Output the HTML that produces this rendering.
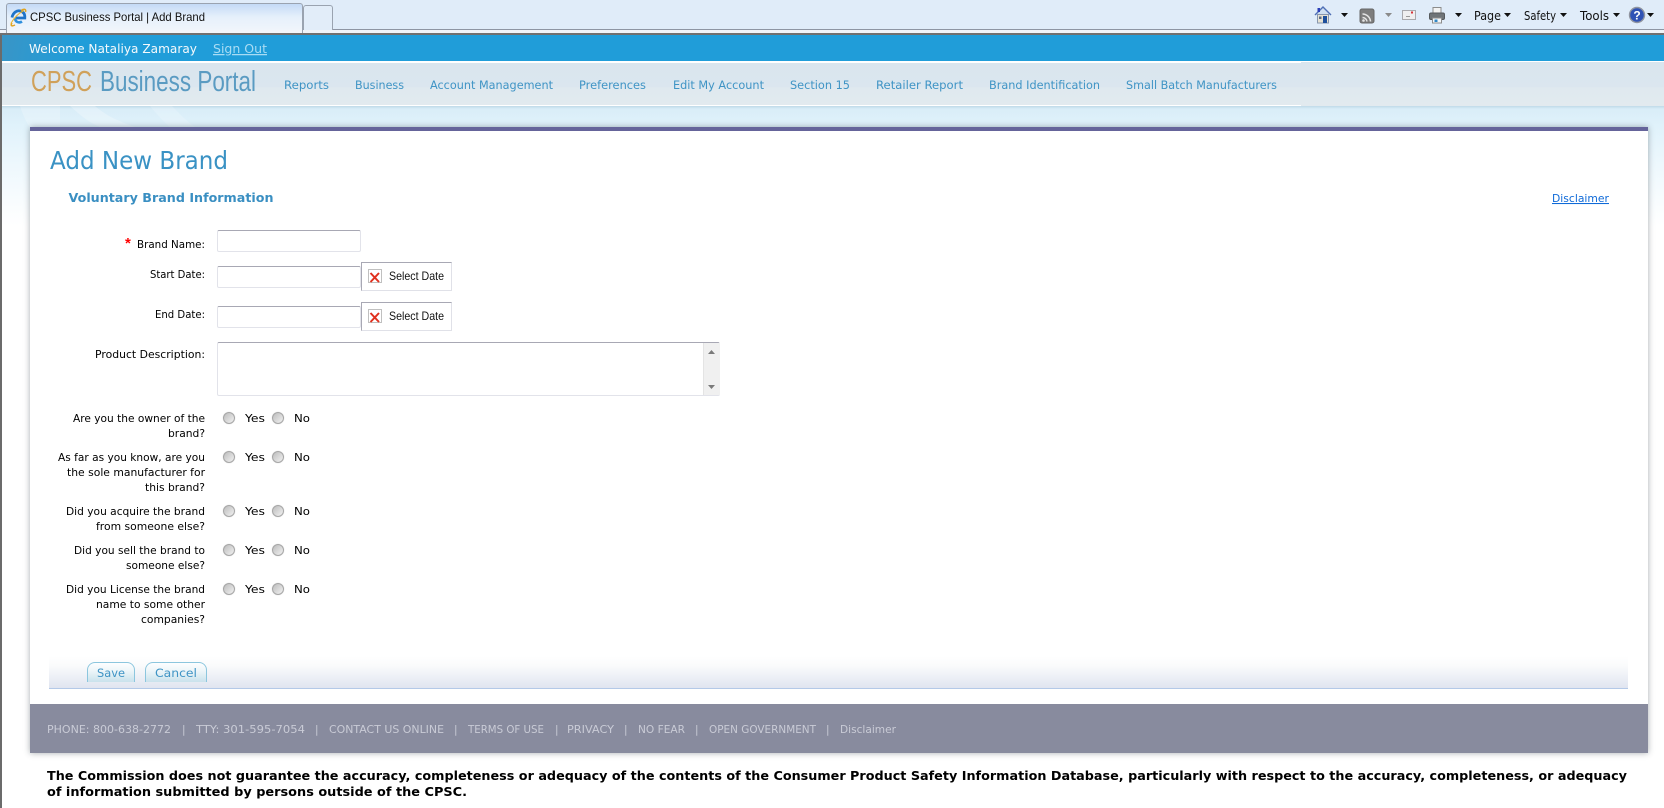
<!DOCTYPE html>
<html lang="en">
<head>
<meta charset="utf-8">
<title>CPSC Business Portal | Add Brand</title>
<style>
html,body{margin:0;padding:0;width:1664px;height:808px;overflow:hidden;background:#fff}
body{position:relative}
.a{position:absolute}
input.t,textarea.t{position:absolute;box-sizing:border-box;margin:0;padding:2px;background:#fff;border:1px solid #e2e3ea;border-top:1px solid #a8a8b4;border-radius:2px;outline:0;resize:none}
input.r{position:absolute;appearance:none;-webkit-appearance:none;margin:0;width:12px;height:12px;border-radius:50%;border:1px solid #a6a6a6;box-sizing:border-box;background:linear-gradient(135deg,#bcbcbc 0,#d4d4d4 45%,#f2f2f2 100%);box-shadow:0 0 1px #ccc}
.btn{position:absolute;box-sizing:border-box;height:20px;top:662px;border:1px solid #8cc6de;border-bottom:0;border-radius:8px 8px 0 0;background:linear-gradient(#fdfeff 0,#eef6f9 40%,#c9e2ec 100%)}
.sel{position:absolute;left:361px;width:91px;height:29px;box-sizing:border-box;background:#fff;border:1px solid #e0e1e8;border-top:1px solid #a8a8b4;border-left:1px solid #a8a8b4}
.x{position:absolute;left:6px;top:6px;width:14px;height:14px;box-sizing:border-box;border:1px solid #c0c0c0;background:#fff}
svg{position:absolute;left:0;top:0}
text{font-family:"DejaVu Sans","Liberation Sans",sans-serif}
.l{font-size:11px;fill:#000}
.n{font-size:11.5px;fill:#3f94c5}
.f{font-size:10.5px;fill:#c9cbd6}
.ar{font-family:"Liberation Sans",sans-serif;font-size:12px;fill:#111}
.b{font-family:"DejaVu Sans",sans-serif;font-size:12.5px;font-weight:bold;fill:#000}
</style>
</head>
<body>
<!-- browser chrome -->
<div class="a" style="left:0;top:0;width:1664px;height:29px;background:#e0ecf9"></div>
<div class="a" style="left:0;top:29px;width:1664px;height:1px;background:#8e95a3"></div>
<div class="a" style="left:0;top:30px;width:1664px;height:3px;background:#f0f4f9"></div>
<div class="a" style="left:0;top:33px;width:1664px;height:2px;background:#707070"></div>
<div class="a" style="left:6px;top:3px;width:297px;height:30px;box-sizing:border-box;border:1px solid #9aa3b0;border-bottom:0;border-radius:3px 3px 0 0;background:linear-gradient(#c4daf6 0,#e6f0fb 45%,#f2f6fb 100%)"></div>
<div class="a" style="left:303px;top:5px;width:30px;height:25px;box-sizing:border-box;border:1px solid #9aa3b0;border-bottom:0;border-radius:3px 3px 0 0;background:#e2edf9"></div>

<!-- page background -->
<div class="a" style="left:0;top:35px;width:2px;height:773px;background:#6b6b6b"></div>
<div class="a" style="left:2px;top:35px;width:1662px;height:26px;background:#209dd9"></div>
<div class="a" style="left:2px;top:35px;width:70px;height:26px;background:linear-gradient(100deg,#3a95c6 0,#209dd9 100%)"></div>
<div class="a" style="left:2px;top:61px;width:1662px;height:1px;background:#fff"></div>
<div class="a" style="left:2px;top:62px;width:1662px;height:44px;background:linear-gradient(#d9e5ee 0,#dbe6ef 56%,#dfe9ef 58%,#e2eaef 100%)"></div>
<div class="a" style="left:2px;top:61px;width:1299px;height:2px;background:#fff"></div>
<div class="a" style="left:2px;top:105px;width:1299px;height:1px;background:#fff"></div>
<div class="a" style="left:2px;top:106px;width:1662px;height:120px;background:linear-gradient(#c0dae8 0,#d9edf8 3px,#e0f2fb 20px,#eef8fd 60px,#fff 100%)"></div>
<svg width="200" height="240" viewBox="0 0 200 240" xmlns="http://www.w3.org/2000/svg">
<path d="M20 106C26 125 34 135 50 150 44 170 36 180 30 190L30 127H60V106Z" fill="#fff" opacity=".22"/>
<path d="M70 106C80 115 88 122 100 127H135C120 122 105 115 95 106Z" fill="#fff" opacity=".25"/>
<path d="M150 106C155 112 162 120 170 127H195C185 120 178 112 172 106Z" fill="#fff" opacity=".18"/>
</svg>

<!-- content panel -->
<div class="a" style="left:30px;top:127px;width:1618px;height:626px;background:#fff;box-shadow:0 0 6px rgba(60,70,80,.45)"></div>
<div class="a" style="left:30px;top:127px;width:1618px;height:4px;background:#65649a"></div>

<!-- form controls -->
<input class="t" type="text" style="left:217px;top:230px;width:144px;height:22px">
<input class="t" type="text" style="left:217px;top:266px;width:144px;height:22px">
<input class="t" type="text" style="left:217px;top:306px;width:144px;height:22px">
<div class="sel" style="top:262px"><div class="x"></div></div>
<div class="sel" style="top:302px"><div class="x"></div></div>
<textarea class="t" style="left:217px;top:342px;width:503px;height:54px"></textarea>
<div class="a" style="left:703px;top:343px;width:16px;height:52px;background:#f0f0f0;border-left:1px solid #e4e4e4"></div>

<input class="r" type="radio" name="q1" style="left:223px;top:412px"><input class="r" type="radio" name="q1" style="left:272px;top:412px">
<input class="r" type="radio" name="q2" style="left:223px;top:451px"><input class="r" type="radio" name="q2" style="left:272px;top:451px">
<input class="r" type="radio" name="q3" style="left:223px;top:505px"><input class="r" type="radio" name="q3" style="left:272px;top:505px">
<input class="r" type="radio" name="q4" style="left:223px;top:544px"><input class="r" type="radio" name="q4" style="left:272px;top:544px">
<input class="r" type="radio" name="q5" style="left:223px;top:583px"><input class="r" type="radio" name="q5" style="left:272px;top:583px">

<!-- button bar + footer -->
<div class="a" style="left:49px;top:656px;width:1579px;height:33px;box-sizing:border-box;background:linear-gradient(#fff 0,#fafbfc 30%,#e0e5f0 100%);border-bottom:1px solid #b4c9e8"></div>
<div class="btn" style="left:87px;width:48px"></div>
<div class="btn" style="left:145px;width:62px"></div>
<div class="a" style="left:30px;top:704px;width:1618px;height:49px;background:#888b9e"></div>

<svg width="1664" height="808" viewBox="0 0 1664 808" xmlns="http://www.w3.org/2000/svg">
<!-- tab -->
<text x="30" y="21" textLength="175" lengthAdjust="spacingAndGlyphs" style="font-family:'Liberation Sans',sans-serif;font-size:12px;fill:#111">CPSC Business Portal | Add Brand</text>
<g transform="translate(10,9)">
<path d="M2 8.500C3 3.500 7 1 10.500 2 14 3 15 6 14.800 9H5.500" fill="none" stroke="#1f74c9" stroke-width="2.800"/>
<path d="M5 9C5 13 9 14.500 12 12.500" fill="none" stroke="#2f8fdc" stroke-width="2.600"/>
<path d="M2 14C0 17 2 17.500 5 16" fill="none" stroke="#e0a422" stroke-width="1.500"/>
<path d="M11 1.500C14 -.5 16.500 0 15.500 3" fill="none" stroke="#e0a422" stroke-width="1.500"/>
<path d="M.8 14.500C4 9 9 4 14 1.500" fill="none" stroke="#e8b330" stroke-width="1"/>
</g>
<!-- toolbar icons -->
<g transform="translate(1315,7)">
<path d="M0 8 8 0 16 8" fill="#cfe0f2" stroke="#4f6fb5" stroke-width="1.400"/>
<path d="M2.500 7.500H13.500V16H2.500Z" fill="#e6e2d4" stroke="#8796ad"/>
<rect x="8" y="9" width="4" height="7" fill="#1d4f9c"/>
<rect x="4" y="9.500" width="2.500" height="2.500" fill="#5d6d85"/>
<rect x="2.500" y="1" width="2.500" height="4" fill="#2b3fb8"/>
</g>
<path d="M1341 13h7l-3.500 4z" fill="#111"/>
<rect x="1360" y="9" width="14" height="14" rx="2" fill="#7d7d7d" stroke="#666"/>
<g fill="none" stroke="#e4e4e4" stroke-width="1.500"><path d="M1362.500 14a8 8 0 0 1 8 7.500"/><path d="M1362.500 17.500a4.500 4.500 0 0 1 4.500 4"/></g><circle cx="1363.500" cy="20.500" r="1.300" fill="#e4e4e4"/>
<path d="M1385 13h7l-3.500 4z" fill="#8a8a8a"/>
<rect x="1402.500" y="10.500" width="13" height="9" fill="#efeff0" stroke="#a9a9ad"/>
<rect x="1411" y="11.500" width="2" height="2" fill="#d6333a"/><path d="M1406 16.500h4" stroke="#9a9a9a"/>
<g transform="translate(1429,7)">
<rect x="4" y="0.500" width="8" height="6" fill="#f3f3f3" stroke="#8c8c8c"/>
<rect x="0.500" y="6" width="15" height="6.500" rx="1.500" fill="#6f7478" stroke="#55595c"/>
<rect x="3.500" y="11" width="9" height="5" fill="#f4f8fa" stroke="#8c8c8c"/>
<rect x="5.500" y="12.500" width="3" height="2.500" fill="#2f86c5"/>
</g>
<path d="M1455 13h7l-3.500 4z" fill="#111"/>
<g style="font-family:'Liberation Sans',sans-serif;font-size:12px;fill:#111">
<text x="1474" y="20" textLength="27" lengthAdjust="spacingAndGlyphs">Page</text>
<text x="1524" y="20" textLength="32" lengthAdjust="spacingAndGlyphs">Safety</text>
<text x="1580" y="20" textLength="29" lengthAdjust="spacingAndGlyphs">Tools</text>
</g>
<path d="M1504 13h7l-3.500 4zM1560 13h7l-3.500 4zM1613 13h7l-3.500 4zM1647 13h7l-3.500 4z" fill="#111"/>
<circle cx="1637" cy="15" r="7.500" fill="#2f52b5" stroke="#8f94a0" stroke-width="1.400"/>
<text x="1637" y="19.500" text-anchor="middle" style="font-family:'Liberation Sans',sans-serif;font-size:12px;font-weight:bold;fill:#fff">?</text>

<!-- header -->
<text x="29" y="53" textLength="168" lengthAdjust="spacingAndGlyphs" style="font-size:12.500px;fill:#f4f9fc">Welcome Nataliya Zamaray</text>
<text x="213" y="53" textLength="54" lengthAdjust="spacingAndGlyphs" style="font-size:12.500px;fill:#a8dcf4;text-decoration:underline">Sign Out</text>
<text x="31" y="91" textLength="61" lengthAdjust="spacingAndGlyphs" style="font-family:'Liberation Sans',sans-serif;font-size:29px;fill:#d0a15a">CPSC</text>
<text x="100" y="91" textLength="156" lengthAdjust="spacingAndGlyphs" style="font-family:'Liberation Sans',sans-serif;font-size:29px;fill:#5a9bc2">Business Portal</text>
<text class="n" x="284" y="89" textLength="45" lengthAdjust="spacingAndGlyphs">Reports</text>
<text class="n" x="355" y="89" textLength="49" lengthAdjust="spacingAndGlyphs">Business</text>
<text class="n" x="430" y="89" textLength="123" lengthAdjust="spacingAndGlyphs">Account Management</text>
<text class="n" x="579" y="89" textLength="67" lengthAdjust="spacingAndGlyphs">Preferences</text>
<text class="n" x="673" y="89" textLength="91" lengthAdjust="spacingAndGlyphs">Edit My Account</text>
<text class="n" x="790" y="89" textLength="60" lengthAdjust="spacingAndGlyphs">Section 15</text>
<text class="n" x="876" y="89" textLength="87" lengthAdjust="spacingAndGlyphs">Retailer Report</text>
<text class="n" x="989" y="89" textLength="111" lengthAdjust="spacingAndGlyphs">Brand Identification</text>
<text class="n" x="1126" y="89" textLength="151" lengthAdjust="spacingAndGlyphs">Small Batch Manufacturers</text>

<!-- titles -->
<text x="50" y="169" textLength="178" lengthAdjust="spacingAndGlyphs" style="font-size:25px;fill:#3a92c4">Add New Brand</text>
<text x="68.500" y="202" textLength="205" lengthAdjust="spacingAndGlyphs" style="font-size:12.500px;font-weight:bold;fill:#3a8fc2">Voluntary Brand Information</text>
<text x="1552" y="202" textLength="57" lengthAdjust="spacingAndGlyphs" style="font-size:10.500px;fill:#0f6ad8;text-decoration:underline">Disclaimer</text>

<!-- labels -->
<text x="125" y="248" style="font-family:'Liberation Sans',sans-serif;font-size:15px;font-weight:bold;fill:#f00">*</text>
<text class="l" x="137" y="248" textLength="68" lengthAdjust="spacingAndGlyphs">Brand Name:</text>
<text class="l" x="150" y="278" textLength="55" lengthAdjust="spacingAndGlyphs">Start Date:</text>
<text class="l" x="155" y="318" textLength="50" lengthAdjust="spacingAndGlyphs">End Date:</text>
<text class="l" x="95" y="358" textLength="110" lengthAdjust="spacingAndGlyphs">Product Description:</text>

<text class="ar" x="389" y="280" textLength="55" lengthAdjust="spacingAndGlyphs">Select Date</text>
<text class="ar" x="389" y="320" textLength="55" lengthAdjust="spacingAndGlyphs">Select Date</text>
<path d="M369.500 272 378 281M378 272 369.500 281" stroke="#e1301e" stroke-width="2" transform="translate(1,1)"/>
<path d="M369.500 312 378 321M378 312 369.500 321" stroke="#e1301e" stroke-width="2" transform="translate(1,1)"/>
<path d="M708 354h7l-3.500-4z" fill="#7a7a7a"/><path d="M708 385h7l-3.500 4z" fill="#7a7a7a"/>

<text class="l" x="73" y="422" textLength="132" lengthAdjust="spacingAndGlyphs">Are you the owner of the</text>
<text class="l" x="168" y="437" textLength="37" lengthAdjust="spacingAndGlyphs">brand?</text>
<text class="l" x="58" y="461" textLength="147" lengthAdjust="spacingAndGlyphs">As far as you know, are you</text>
<text class="l" x="67" y="476" textLength="138" lengthAdjust="spacingAndGlyphs">the sole manufacturer for</text>
<text class="l" x="145" y="491" textLength="60" lengthAdjust="spacingAndGlyphs">this brand?</text>
<text class="l" x="66" y="515" textLength="139" lengthAdjust="spacingAndGlyphs">Did you acquire the brand</text>
<text class="l" x="96" y="530" textLength="109" lengthAdjust="spacingAndGlyphs">from someone else?</text>
<text class="l" x="74" y="554" textLength="131" lengthAdjust="spacingAndGlyphs">Did you sell the brand to</text>
<text class="l" x="126" y="569" textLength="79" lengthAdjust="spacingAndGlyphs">someone else?</text>
<text class="l" x="66" y="593" textLength="139" lengthAdjust="spacingAndGlyphs">Did you License the brand</text>
<text class="l" x="96" y="608" textLength="109" lengthAdjust="spacingAndGlyphs">name to some other</text>
<text class="l" x="141" y="623" textLength="64" lengthAdjust="spacingAndGlyphs">companies?</text>

<text class="l" x="245" y="422" textLength="20" lengthAdjust="spacingAndGlyphs">Yes</text><text class="l" x="294" y="422" textLength="16" lengthAdjust="spacingAndGlyphs">No</text>
<text class="l" x="245" y="461" textLength="20" lengthAdjust="spacingAndGlyphs">Yes</text><text class="l" x="294" y="461" textLength="16" lengthAdjust="spacingAndGlyphs">No</text>
<text class="l" x="245" y="515" textLength="20" lengthAdjust="spacingAndGlyphs">Yes</text><text class="l" x="294" y="515" textLength="16" lengthAdjust="spacingAndGlyphs">No</text>
<text class="l" x="245" y="554" textLength="20" lengthAdjust="spacingAndGlyphs">Yes</text><text class="l" x="294" y="554" textLength="16" lengthAdjust="spacingAndGlyphs">No</text>
<text class="l" x="245" y="593" textLength="20" lengthAdjust="spacingAndGlyphs">Yes</text><text class="l" x="294" y="593" textLength="16" lengthAdjust="spacingAndGlyphs">No</text>

<text x="97" y="677" textLength="28" lengthAdjust="spacingAndGlyphs" style="font-size:11.500px;fill:#3f94c5">Save</text>
<text x="155" y="677" textLength="42" lengthAdjust="spacingAndGlyphs" style="font-size:11.500px;fill:#3f94c5">Cancel</text>

<!-- footer -->
<text class="f" x="47" y="733" textLength="124" lengthAdjust="spacingAndGlyphs">PHONE: 800-638-2772</text>
<text class="f" x="196" y="733" textLength="109" lengthAdjust="spacingAndGlyphs">TTY: 301-595-7054</text>
<text class="f" x="329" y="733" textLength="115" lengthAdjust="spacingAndGlyphs">CONTACT US ONLINE</text>
<text class="f" x="468" y="733" textLength="76" lengthAdjust="spacingAndGlyphs">TERMS OF USE</text>
<text class="f" x="567" y="733" textLength="47" lengthAdjust="spacingAndGlyphs">PRIVACY</text>
<text class="f" x="638" y="733" textLength="47" lengthAdjust="spacingAndGlyphs">NO FEAR</text>
<text class="f" x="709" y="733" textLength="107" lengthAdjust="spacingAndGlyphs">OPEN GOVERNMENT</text>
<text class="f" x="840" y="733" textLength="56" lengthAdjust="spacingAndGlyphs">Disclaimer</text>
<g class="f">
<text class="f" x="182" y="733">|</text><text class="f" x="315" y="733">|</text><text class="f" x="454" y="733">|</text><text class="f" x="555" y="733">|</text><text class="f" x="624" y="733">|</text><text class="f" x="695" y="733">|</text><text class="f" x="826" y="733">|</text>
</g>

<!-- disclaimer -->
<text class="b" x="47" y="780" textLength="1580" lengthAdjust="spacingAndGlyphs">The Commission does not guarantee the accuracy, completeness or adequacy of the contents of the Consumer Product Safety Information Database, particularly with respect to the accuracy, completeness, or adequacy</text>
<text class="b" x="47" y="796" textLength="420" lengthAdjust="spacingAndGlyphs">of information submitted by persons outside of the CPSC.</text>
</svg>
</body>
</html>
